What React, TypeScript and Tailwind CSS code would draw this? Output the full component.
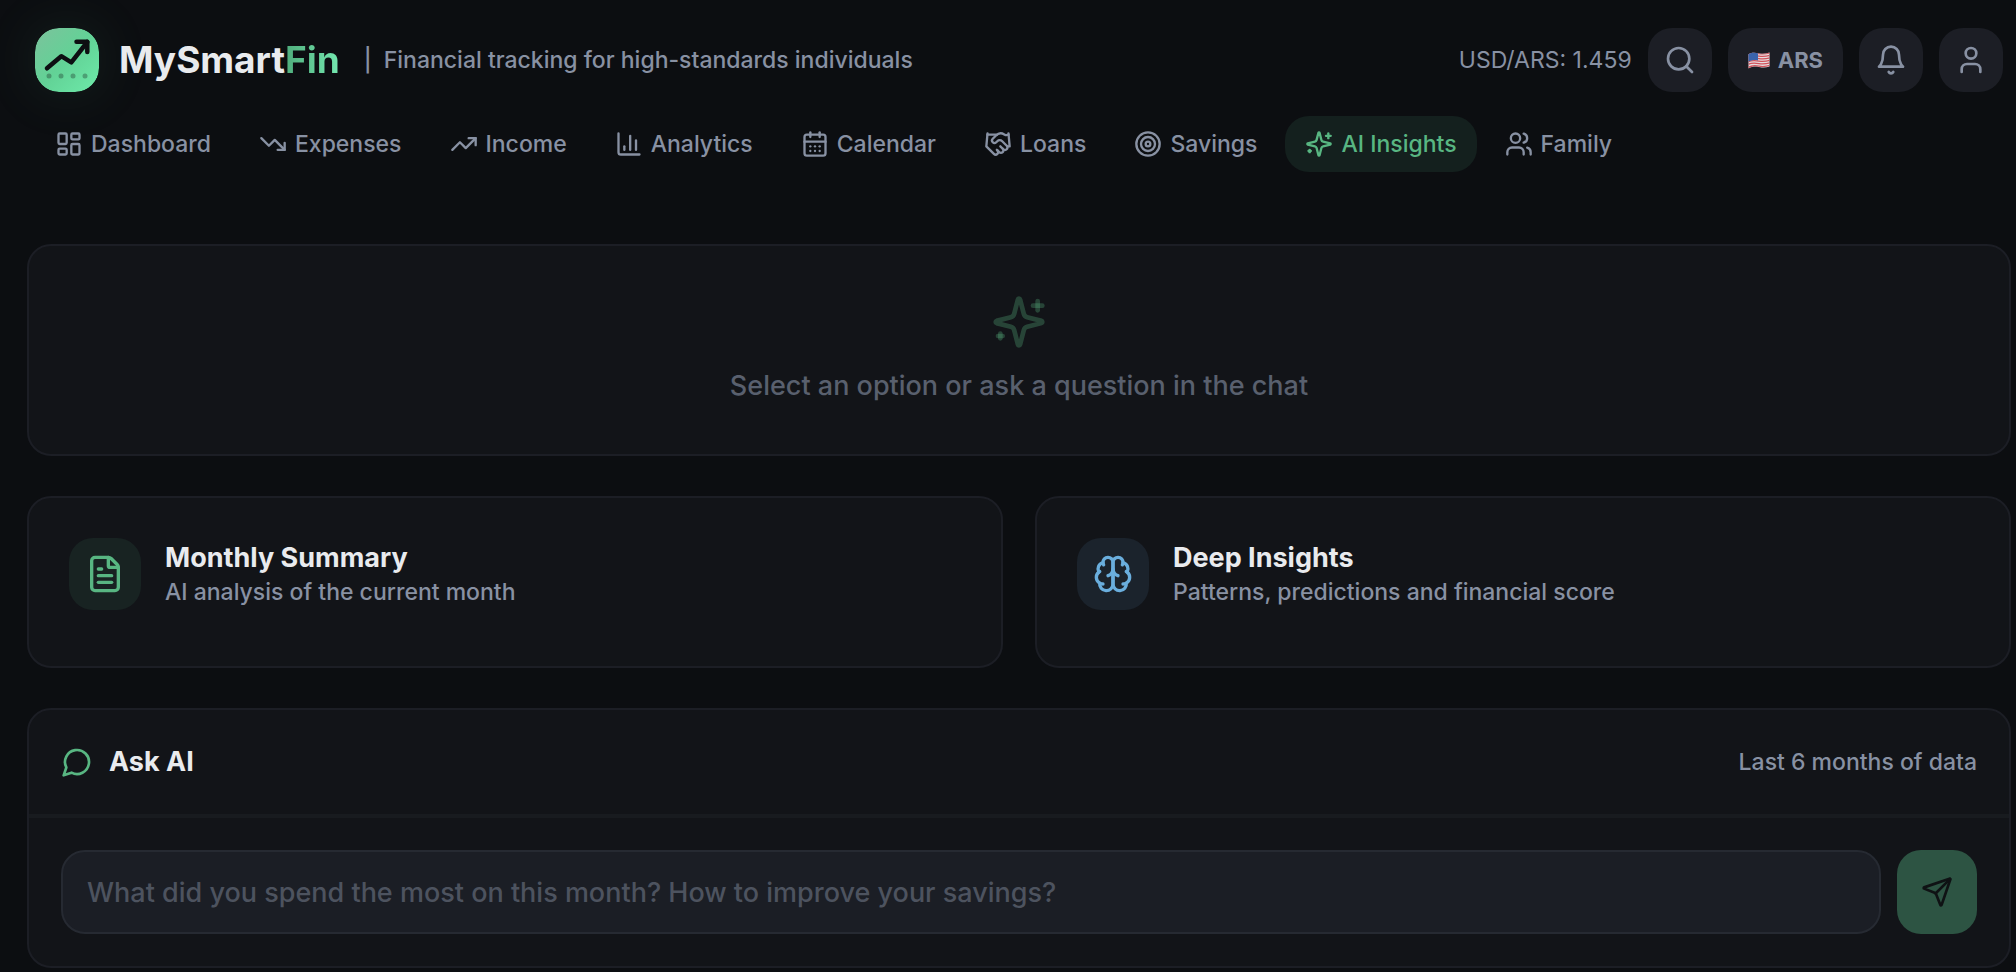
import { useState, type ComponentType, type ReactNode } from "react";
import {
  CalendarDays,
  FileText,
  LayoutDashboard,
  Search,
  Send,
  Target,
  TrendingDown,
  TrendingUp,
  User,
  Users,
} from "lucide-react";
import clsx from "clsx";

interface IconProps {
  size?: number | string;
  className?: string;
}

type IconType = ComponentType<IconProps>;

function Glyph({ size = 24, className, children }: IconProps & { children: ReactNode }) {
  return (
    <svg
      width={size}
      height={size}
      viewBox="0 0 24 24"
      fill="none"
      stroke="currentColor"
      strokeWidth={2}
      strokeLinecap="round"
      strokeLinejoin="round"
      className={className}
      aria-hidden
    >
      {children}
    </svg>
  );
}

function AnalyticsIcon(props: IconProps) {
  return (
    <Glyph {...props}>
      <path d="M3 3v16a2 2 0 0 0 2 2h16" />
      <path d="M13 17V5" />
      <path d="M18 17V9" />
      <path d="M8 17v-3" />
    </Glyph>
  );
}

function LoansIcon(props: IconProps) {
  return (
    <Glyph {...props}>
      <path d="m11 17 2 2a1 1 0 1 0 3-3" />
      <path d="m14 14 2.5 2.5a1 1 0 1 0 3-3l-3.88-3.88a3 3 0 0 0-4.24 0l-.88.88a1 1 0 1 1-3-3l2.81-2.81a5.79 5.79 0 0 1 7.06-.87l.47.28a2 2 0 0 0 1.42.25L21 4" />
      <path d="m21 3 1 11h-2" />
      <path d="M3 3 2 14l6.5 6.5a1 1 0 1 0 3-3" />
      <path d="M3 4h8" />
    </Glyph>
  );
}

function SparklesIcon(props: IconProps) {
  return (
    <Glyph {...props}>
      <path d="M9.937 15.5A2 2 0 0 0 8.5 14.063l-6.135-1.582a.5.5 0 0 1 0-.962L8.5 9.936A2 2 0 0 0 9.937 8.5l1.582-6.135a.5.5 0 0 1 .963 0L14.063 8.5A2 2 0 0 0 15.5 9.937l6.135 1.581a.5.5 0 0 1 0 .964L15.5 14.063a2 2 0 0 0-1.437 1.437l-1.582 6.135a.5.5 0 0 1-.963 0z" />
      <path d="M20 3v4" />
      <path d="M22 5h-4" />
      <path d="M4 17v2" />
      <path d="M5 18H3" />
    </Glyph>
  );
}

function BrainIcon(props: IconProps) {
  return (
    <Glyph {...props}>
      <path d="M12 5a3 3 0 1 0-5.997.125 4 4 0 0 0-2.526 5.77 4 4 0 0 0 .556 6.588A4 4 0 1 0 12 18Z" />
      <path d="M12 5a3 3 0 1 1 5.997.125 4 4 0 0 1 2.526 5.77 4 4 0 0 1-.556 6.588A4 4 0 1 1 12 18Z" />
      <path d="M15 13a4.5 4.5 0 0 1-3-4 4.5 4.5 0 0 1-3 4" />
      <path d="M17.599 6.5a3 3 0 0 0 .399-1.375" />
      <path d="M6.003 5.125A3 3 0 0 0 6.401 6.5" />
      <path d="M3.477 10.896a4 4 0 0 1 .585-.396" />
      <path d="M19.938 10.5a4 4 0 0 1 .585.396" />
      <path d="M6 18a4 4 0 0 1-1.967-.516" />
      <path d="M19.967 17.484A4 4 0 0 1 18 18" />
    </Glyph>
  );
}

function ChatIcon(props: IconProps) {
  return (
    <Glyph {...props}>
      <path d="M7.9 20A9 9 0 1 0 4 16.1L2 22Z" />
    </Glyph>
  );
}

function BellIcon(props: IconProps) {
  return (
    <Glyph {...props}>
      <path d="M6 8a6 6 0 0 1 12 0c0 7 3 9 3 9H3s3-2 3-9" />
      <path d="M10.3 21a1.94 1.94 0 0 0 3.4 0" />
    </Glyph>
  );
}

const NAV: { label: string; icon: IconType }[] = [
  { label: "Dashboard", icon: LayoutDashboard },
  { label: "Expenses", icon: TrendingDown },
  { label: "Income", icon: TrendingUp },
  { label: "Analytics", icon: AnalyticsIcon },
  { label: "Calendar", icon: CalendarDays },
  { label: "Loans", icon: LoansIcon },
  { label: "Savings", icon: Target },
  { label: "AI Insights", icon: SparklesIcon },
  { label: "Family", icon: Users },
];

function Logo() {
  return (
    <svg viewBox="0 0 64 64" className="size-16 rounded-3xl shadow-[0_0_56px_rgba(88,182,130,0.12)]" aria-hidden>
      <defs>
        <linearGradient id="logo-bg" x1="0" y1="0" x2="1" y2="1">
          <stop offset="0" stopColor="#7cc29c" />
          <stop offset="0.5" stopColor="#62d296" />
          <stop offset="1" stopColor="#6eeaaa" />
        </linearGradient>
      </defs>
      <rect width="64" height="64" rx="24" fill="url(#logo-bg)" />
      <g fill="none" stroke="#0d0f12" strokeWidth="4.5" strokeLinecap="round" strokeLinejoin="round">
        <path d="M12 40.3 26.3 28.2 36.3 34.3 52.3 14" />
        <path d="M41.5 13.8H52.3V24" />
      </g>
      <g fill="#0d0f12" fillOpacity="0.3">
        <circle cx="14" cy="48" r="2.5" />
        <circle cx="26" cy="48" r="2.5" />
        <circle cx="38" cy="48" r="2.5" />
        <circle cx="50" cy="48" r="2.5" />
      </g>
    </svg>
  );
}

function UsFlag() {
  return (
    <svg viewBox="0 0 22 17" className="h-[17px] w-[22px]" aria-hidden>
      <defs>
        <clipPath id="flag-wave">
          <path d="M0.5 2.2C4 0.2 7 0.6 11 1.4S18 1.8 21.5 0.6V14.4C18 15.8 15 15.8 11 15S4 14.6 0.5 16.4Z" />
        </clipPath>
      </defs>
      <g clipPath="url(#flag-wave)">
        <rect width="22" height="17" fill="#e6dcdf" />
        <g fill="none" stroke="#d0525a" strokeWidth="1.3">
          <path d="M0 2.4C4 .4 7 .8 11 1.6S18 2 22 .8" />
          <path d="M0 4.9C4 2.9 7 3.3 11 4.1S18 4.5 22 3.3" />
          <path d="M0 7.4C4 5.4 7 5.8 11 6.6S18 7 22 5.8" />
          <path d="M0 9.9C4 7.9 7 8.3 11 9.1S18 9.5 22 8.3" />
          <path d="M0 12.4C4 10.4 7 10.8 11 11.6S18 12 22 10.8" />
          <path d="M0 15.6C4 13 7 13.4 11 14.2S18 14.6 22 13.4" />
        </g>
        <path d="M0 0H10V8.4C7 7.8 4 7.8 0 9.8Z" fill="#3a64ac" />
      </g>
    </svg>
  );
}

function IconButton({ label, icon: Icon }: { label: string; icon: IconType }) {
  return (
    <button
      type="button"
      aria-label={label}
      className="flex size-16 shrink-0 items-center justify-center rounded-3xl bg-[#1c1e25] text-[#8891a3]"
    >
      <Icon size={32} />
    </button>
  );
}

function Header() {
  return (
    <header className="px-2 pt-7">
      <div className="flex items-center justify-between">
        <div className="flex items-center">
          <Logo />
          <div className="ml-5 text-[37px]/[48px] font-bold text-[#e9ebee]">
            MySmart
            <span className="bg-linear-to-r from-[#50ad7c] to-[#74e8b0] bg-clip-text text-transparent">Fin</span>
          </div>
          <p className="ml-6 flex gap-3 text-[23px]/[32px] font-medium text-[#8891a3]">
            <span>|</span>
            <span>Financial tracking for high-standards individuals</span>
          </p>
        </div>
        <div className="flex items-center gap-4">
          <span className="text-[23px]/[32px] text-[#8891a3]">USD/ARS: 1.459</span>
          <IconButton label="Search" icon={Search} />
          <button
            type="button"
            className="flex h-16 items-center gap-2 rounded-3xl bg-[#1c1e25] px-5 text-[22px]/[32px] font-bold text-[#8891a3]"
          >
            <UsFlag />
            ARS
          </button>
          <IconButton label="Notifications" icon={BellIcon} />
          <IconButton label="Profile" icon={User} />
        </div>
      </div>
      <nav className="mt-6 flex gap-2">
        {NAV.map(({ label, icon: Icon }) => {
          const active = label === "AI Insights";
          return (
            <a
              key={label}
              href="#"
              aria-current={active ? "page" : undefined}
              className={clsx(
                "flex h-14 items-center gap-2 rounded-3xl px-5 text-[23px]/[32px] font-medium whitespace-nowrap",
                active ? "bg-[#14201e] text-[#58b682]" : "text-[#8891a3]",
              )}
            >
              <Icon size={28} />
              {label}
            </a>
          );
        })}
      </nav>
    </header>
  );
}

function OptionCard({
  title,
  description,
  icon: Icon,
  tone,
}: {
  title: string;
  description: string;
  icon: IconType;
  tone: string;
}) {
  return (
    <button
      type="button"
      className="flex items-start gap-6 rounded-3xl border-2 border-[#1c1e25] bg-[#121418] px-10 pt-10 pb-14 text-left"
    >
      <span className={clsx("flex size-18 shrink-0 items-center justify-center rounded-3xl", tone)}>
        <Icon size={40} />
      </span>
      <span className="flex flex-col pt-1">
        <span className="text-[27px]/[32px] font-bold text-[#e9ebee]">{title}</span>
        <span className="text-[23px]/[36px] font-medium text-[#8891a3]">{description}</span>
      </span>
    </button>
  );
}

function AskCard() {
  const [question, setQuestion] = useState("");

  return (
    <section className="mt-10 rounded-3xl border-2 border-[#1c1e25] bg-[#121418]">
      <div className="flex h-27 items-center justify-between border-b-4 border-[#181b1f] px-8">
        <h2 className="flex items-center gap-4 text-[27px]/[40px] font-bold text-[#e9ebee]">
          <ChatIcon size={32} className="text-[#58b682]" />
          Ask AI
        </h2>
        <span className="text-[23px]/[32px] font-medium text-[#8891a3]">Last 6 months of data</span>
      </div>
      <form className="flex gap-4 p-8" onSubmit={(e) => e.preventDefault()}>
        <input
          type="text"
          aria-label="Ask AI"
          value={question}
          onChange={(e) => setQuestion(e.target.value)}
          placeholder="What did you spend the most on this month? How to improve your savings?"
          className="h-21 min-w-0 flex-1 rounded-3xl border-2 border-[#262a32] bg-[#1b1e25] px-6 text-[27px]/[40px] font-medium text-[#e9ebee] outline-none placeholder:text-[#4d535f]"
        />
        <button
          type="submit"
          aria-label="Send"
          className="flex h-21 w-20 shrink-0 items-center justify-center rounded-3xl bg-[#2d5443] text-[#0f1214]"
        >
          <Send size={32} />
        </button>
      </form>
    </section>
  );
}

export default function App() {
  return (
    <div className="min-h-screen bg-[#0c0e11] pr-[5px] pl-[27px] font-['Inter',sans-serif]">
      <Header />
      <main className="pt-18">
        <section className="flex flex-col items-center gap-4 rounded-3xl border-2 border-[#1c1e25] bg-[#121418] py-12">
          <SparklesIcon size={56} className="text-[#58b682]/30" />
          <p className="text-[27px]/[40px] font-medium text-[#59606e]">Select an option or ask a question in the chat</p>
        </section>
        <div className="mt-10 grid grid-cols-2 gap-8">
          <OptionCard
            title="Monthly Summary"
            description="AI analysis of the current month"
            icon={FileText}
            tone="bg-[#182322] text-[#58b682]"
          />
          <OptionCard
            title="Deep Insights"
            description="Patterns, predictions and financial score"
            icon={BrainIcon}
            tone="bg-[#1b232c] text-[#6aaedd]"
          />
        </div>
        <AskCard />
      </main>
    </div>
  );
}
